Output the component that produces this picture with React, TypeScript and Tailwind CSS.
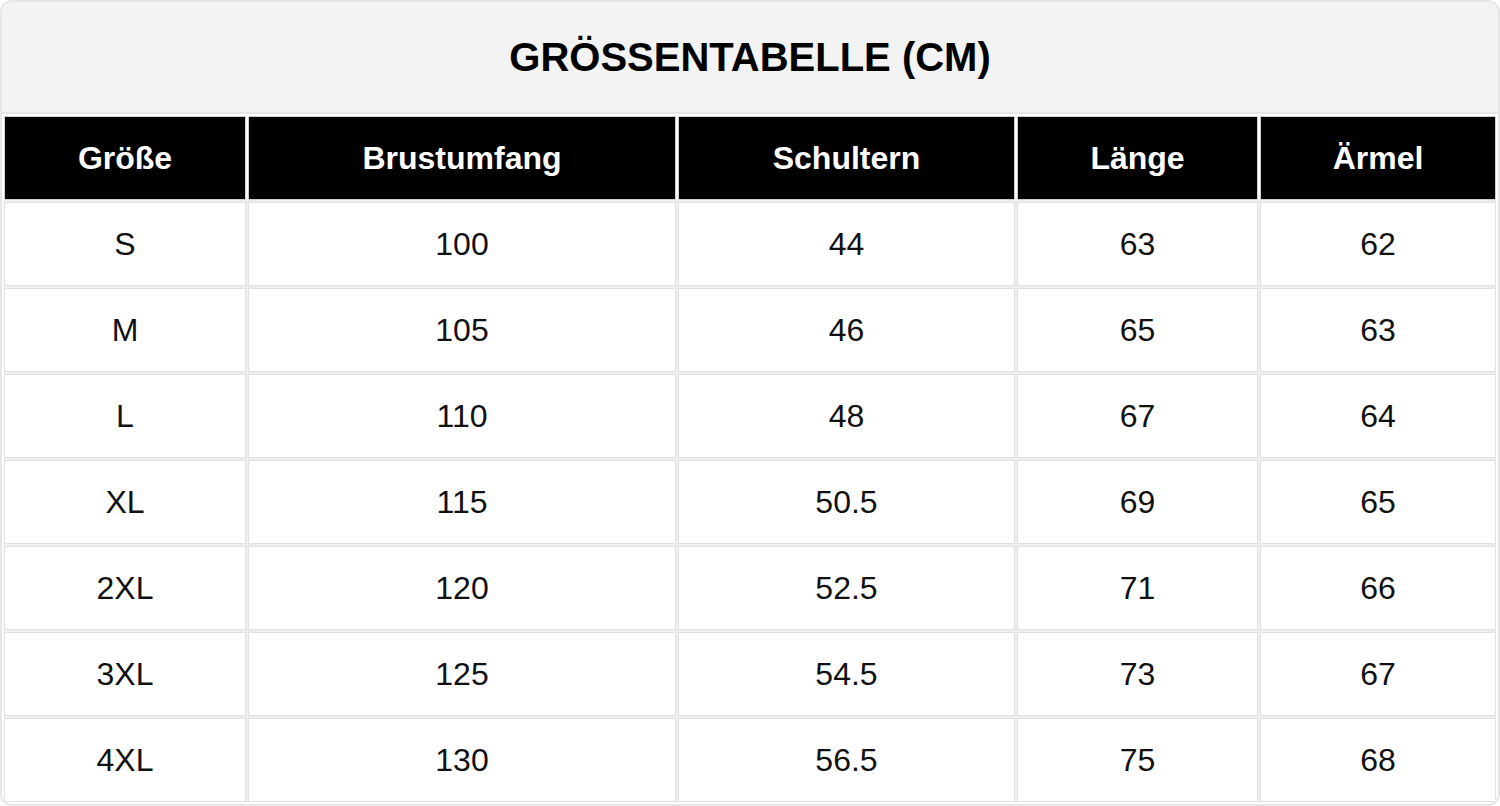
const headers = ['Größe', 'Brustumfang', 'Schultern', 'Länge', 'Ärmel']

const rows = [
  ['S', '100', '44', '63', '62'],
  ['M', '105', '46', '65', '63'],
  ['L', '110', '48', '67', '64'],
  ['XL', '115', '50.5', '69', '65'],
  ['2XL', '120', '52.5', '71', '66'],
  ['3XL', '125', '54.5', '73', '67'],
  ['4XL', '130', '56.5', '75', '68']
]

export default function App() {
  return (
    <div className="bg-white font-['Liberation_Sans',Arial,sans-serif]">
      <div className="border-2 border-[#e6e6e6] rounded-[12px] overflow-hidden">
        {/* Title */}
        <div className="bg-[#f3f3f3] h-[112px] border-b-2 border-[#e6e6e6] flex items-center justify-center">
          <h2 className="text-[40px] font-bold text-black leading-none">GRÖSSENTABELLE (CM)</h2>
        </div>

        <div className="p-[2px] bg-white">
          {/* Header row */}
          <div className="grid grid-cols-[242px_428px_337px_241px_236px] gap-[2px]">
            {headers.map((h) => (
              <div
                key={h}
                className="h-[84px] bg-black border border-[#cfcfcf] flex items-center justify-center text-white text-[32px] font-bold"
              >
                {h}
              </div>
            ))}
          </div>

          {/* Data rows */}
          <div className="grid grid-cols-[242px_428px_337px_241px_236px] gap-[2px] pt-[2px] bg-[#eeeeee]">
            {rows.map((r) =>
              r.map((v, i) => (
                <div
                  key={r[0] + i}
                  className="h-[84px] bg-white border border-[#e0e0e0] flex items-center justify-center text-[#111] text-[32px]"
                >
                  {v}
                </div>
              ))
            )}
          </div>
        </div>
      </div>
    </div>
  )
}
